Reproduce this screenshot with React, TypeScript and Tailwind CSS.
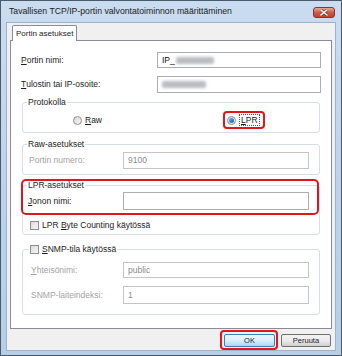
import React from "react";

const ui = "font-['Liberation_Sans',Arial,sans-serif]";

function Radio({ checked = false }: { checked?: boolean }) {
  return (
    <span className="flex h-[9px] w-[9px] shrink-0 items-center justify-center rounded-full border border-[#8d8f92] bg-gradient-to-br from-[#d9d9d9] to-[#f7f7f7]">
      {checked ? (
        <span className="h-[5px] w-[5px] rounded-full bg-gradient-to-br from-[#6fb3ea] to-[#1a56a0]" />
      ) : null}
    </span>
  );
}

function Check({ disabled = false }: { disabled?: boolean }) {
  return (
    <span
      className={`h-[9px] w-[9px] shrink-0 border bg-gradient-to-br ${
        disabled ? "border-[#a9a9a9] from-[#e0e0e0] to-[#f4f4f4]" : "border-[#8e8f8f] from-[#dcdcdc] to-[#f6f6f6]"
      }`}
    />
  );
}

function Field({ h, disabled = false, children }: { h: string; disabled?: boolean; children?: React.ReactNode }) {
  return (
    <div
      className={`flex items-center border bg-white pl-[4px] ${h} ${
        disabled ? "border-[#c2c4c8] text-[#8a8a8a]" : "border-[#abadb3] text-[#111]"
      }`}
    >
      {children}
    </div>
  );
}

function Blur({ w }: { w: string }) {
  return <span className={`h-[7px] rounded-[2px] bg-[#b9bcc0] blur-[1.5px] ${w}`} />;
}

export default function App() {
  return (
    <div className={`${ui} flex h-[356px] w-[342px] flex-col border border-[#4b5a6b] bg-gradient-to-b from-[#cadcf0] via-[#bed3ea] to-[#b8cee6] text-[8.5px] text-[#1b1b1b]`}>
      {/* title bar */}
      <div className="flex h-[21px] shrink-0 items-center justify-between pl-[8px] pr-[6px]">
        <span className="text-[8.7px] leading-none text-[#1a1a1a]">
          Tavallisen TCP/IP-portin valvontatoiminnon määrittäminen
        </span>
        <span className="mt-[2px] flex h-[11px] w-[22px] items-center justify-center rounded-[3px] border border-[#7d3a32] bg-gradient-to-b from-[#e9a898] via-[#cf5a45] to-[#c0402e]">
          <svg width="8" height="7" viewBox="0 0 8 7">
            <path d="M1 1 L7 6 M7 1 L1 6" stroke="#5a2018" strokeWidth="2.6" strokeLinecap="square" />
            <path d="M1 1 L7 6 M7 1 L1 6" stroke="#ffffff" strokeWidth="1.5" strokeLinecap="square" />
          </svg>
        </span>
      </div>

      {/* client area */}
      <div className="mx-[5px] mb-[6px] flex flex-1 flex-col border border-[#9eb3ca] bg-[#f0f0f0]">
        <div className="relative z-10 mt-[2px] -mb-px ml-[5px] flex h-[16px] w-[65px] items-center rounded-t-[2px] border border-b-0 border-[#898c95] bg-white pl-[3px] text-[8px] text-[#222]">
          Portin asetukset
        </div>

        <div className="ml-[3px] flex h-[289px] w-[322px] flex-col border border-[#898c95] bg-white">
          <div className="mt-[11px] flex h-[16px] items-stretch">
            <span className="flex w-[146px] items-center pl-[10px]">
              <u>P</u>ortin nimi:
            </span>
            <div className="w-[164px]">
              <Field h="h-[16px]">
                <span className="mr-[1px]">IP_</span>
                <Blur w="w-[38px]" />
              </Field>
            </div>
          </div>

          <div className="mt-[8px] flex h-[17px] items-stretch">
            <span className="flex w-[146px] items-center pl-[10px]">
              <u>T</u>ulostin tai IP-osoite:
            </span>
            <div className="w-[164px]">
              <Field h="h-[17px]">
                <Blur w="w-[44px]" />
              </Field>
            </div>
          </div>

          {/* Protokolla */}
          <fieldset className="mt-[3px] ml-[11px] w-[298px] rounded-[3px] border border-[#d5dfe5]">
            <legend className="ml-[4px] h-[12px] px-[1px] leading-[12px]">Protokolla</legend>
            <div className="flex h-[24px] items-center">
              <span className="flex w-[150px] items-center gap-[3px] pl-[50px]">
                <Radio />
                <span>
                  <u>R</u>aw
                </span>
              </span>
              <span className="ml-[50px] flex h-[18px] items-center gap-[3px] rounded-[4px] border-2 border-[#e3161d] pl-[2px] pr-[3px]">
                <Radio checked />
                <span className="border border-dotted border-[#555] px-[1px] leading-[10px]">
                  <u>L</u>PR
                </span>
              </span>
            </div>
          </fieldset>

          {/* Raw-asetukset */}
          <fieldset className="mt-[5px] ml-[11px] w-[298px] rounded-[3px] border border-[#d5dfe5]">
            <legend className="ml-[4px] h-[12px] px-[1px] leading-[12px]">Raw-asetukset</legend>
            <div className="mt-[2px] flex h-[17px] items-stretch">
              <span className="flex w-[100px] items-center pl-[6px] text-[#a3a3a3]">Portin numero:</span>
              <div className="w-[186px]">
                <Field h="h-[17px]" disabled>
                  9100
                </Field>
              </div>
            </div>
            <div className="h-[5px]" />
          </fieldset>

          {/* LPR-asetukset */}
          <fieldset className="relative mt-[4px] ml-[11px] w-[298px] rounded-[3px] border border-[#d5dfe5]">
            <legend className="ml-[4px] h-[12px] px-[1px] leading-[12px]">LPR-asetukset</legend>
            <div className="mt-[1px] flex h-[18px] items-stretch">
              <span className="flex w-[100px] items-center pl-[5px]">
                <u>J</u>onon nimi:
              </span>
              <div className="w-[186px]">
                <Field h="h-[18px]" />
              </div>
            </div>
            <div className="mt-[7px] mb-[1px] flex h-[16px] items-center gap-[3px] pl-[7px]">
              <Check />
              <span>
                LPR <u>B</u>yte Counting käytössä
              </span>
            </div>
            {/* highlight drawn over the group */}
            <div className="pointer-events-none absolute top-[-12px] left-[-2px] h-[36px] w-[298px] rounded-[5px] border-2 border-[#e3161d]" />
          </fieldset>

          {/* SNMP */}
          <fieldset className="mt-[8px] ml-[11px] w-[298px] rounded-[3px] border border-[#d5dfe5]">
            <legend className="ml-[6px] flex h-[12px] items-center gap-[3px] px-[1px] leading-[12px]">
              <Check />
              <span>
                <u>S</u>NMP-tila käytössä
              </span>
            </legend>
            <div className="mt-[7px] flex h-[16px] items-stretch">
              <span className="flex w-[100px] items-center pl-[8px] text-[#a3a3a3]">
                <u>Y</u>hteisönimi:
              </span>
              <div className="w-[186px]">
                <Field h="h-[16px]" disabled>
                  public
                </Field>
              </div>
            </div>
            <div className="mt-[8px] flex h-[18px] items-stretch">
              <span className="flex w-[100px] items-center pl-[8px] text-[#a3a3a3]">SNMP-laiteindeksi:</span>
              <div className="w-[186px]">
                <Field h="h-[18px]" disabled>
                  1
                </Field>
              </div>
            </div>
            <div className="h-[10px]" />
          </fieldset>
        </div>

        {/* buttons */}
        <div className="mt-[1px] flex items-start justify-end gap-[3px] pr-[4px] text-[7.5px]">
          <span className="flex rounded-[4px] border-2 border-[#e3161d] pt-[2px] pr-[1px] pb-[1px] pl-[2px]">
            <span className="flex h-[13px] w-[51px] items-center justify-center rounded-[2px] border border-[#3c7fb1] bg-gradient-to-b from-[#eaf6fd] via-[#d9f0fc] to-[#a7d9f5] text-[#222]">
              OK
            </span>
          </span>
          <span className="mt-[4px] flex h-[13px] w-[50px] items-center justify-center rounded-[2px] border border-[#707070] bg-gradient-to-b from-[#f2f2f2] via-[#ebebeb] to-[#cfcfcf] text-[#222]">
            Peruuta
          </span>
        </div>
      </div>
    </div>
  );
}
